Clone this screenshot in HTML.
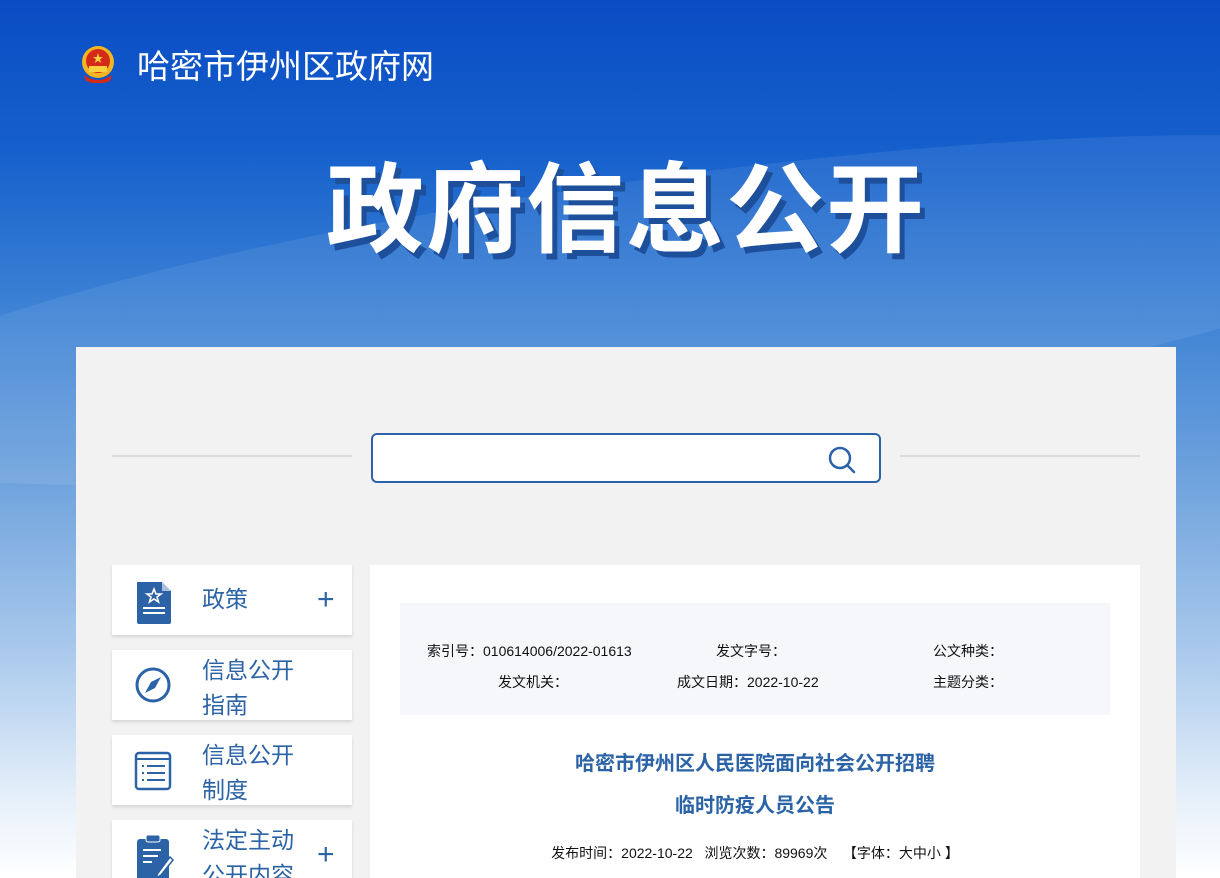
<!DOCTYPE html>
<html><head><meta charset="utf-8"><style>
*{margin:0;padding:0;box-sizing:border-box}
html,body{width:1220px;height:878px;overflow:hidden}
body{position:relative;font-family:"Liberation Sans","Noto Sans CJK SC",sans-serif;
background:linear-gradient(180deg,#0a4cc4 0px,#1560cc 150px,#3a80d4 300px,#6fa3dd 480px,#a9c9ec 650px,#e6f0fa 800px,#ffffff 878px);}
#wrap{position:absolute;left:0;top:0;width:1220px;height:878px;overflow:hidden}
.wave{position:absolute;left:-200px;top:180px;width:1700px;height:260px;border-radius:50%;background:rgba(255,255,255,0.08);transform:rotate(-8deg)}
.logo{position:absolute;left:80px;top:45px;width:36px;height:38px}
.site{position:absolute;left:137px;top:40px;color:#fff;font-size:33px}
.big{position:absolute;left:0;width:1252px;top:131px;text-align:center;color:#fff;font-size:98px;font-weight:bold;letter-spacing:2px;text-shadow:5px 6px 0 #1d4f9a}
.panel{position:absolute;left:76px;top:347px;width:1100px;height:531px;background:#f2f2f2}
.line{position:absolute;top:455px;height:2px;background:#dcdcdc}
.search{position:absolute;left:371px;top:433px;width:510px;height:50px;border:2px solid #2c62a8;border-radius:6px;background:#fff}
.nav{position:absolute;left:112px;width:240px;height:70px;background:#fff;box-shadow:0 2px 3px rgba(0,0,0,0.12);color:#2b63a6;font-size:23px}
.nav .t{position:absolute;left:90px;line-height:35px}
.nav .p{position:absolute;left:205px;top:20px;font-size:30px;line-height:30px}
.nav svg{position:absolute;left:22px;top:15px}
.main{position:absolute;left:370px;top:565px;width:770px;height:313px;background:#fff}
.info{position:absolute;left:400px;top:603px;width:710px;height:112px;background:#f5f7fb;font-size:14px;color:#111}
.info span{position:absolute;white-space:nowrap}
.h{position:absolute;left:370px;width:770px;text-align:center;color:#2b63a6;font-weight:bold;font-size:20px}
.meta{position:absolute;left:370px;width:770px;top:843px;text-align:center;font-size:14px;color:#111}
</style></head><body><div id="wrap">
<div class="wave"></div>
<svg class="logo" viewBox="0 0 36 38"><circle cx="18" cy="17" r="16" fill="#f2b620"/><circle cx="18" cy="16" r="12" fill="#d42a1a"/><polygon points="18,8 19.3,12 23,12 20,14.3 21.2,18 18,15.7 14.8,18 16,14.3 13,12 16.7,12" fill="#f8d040"/><rect x="9" y="21" width="18" height="6" fill="#f8d040"/><path d="M4 30 Q18 40 32 30 L30 36 Q18 41 6 36Z" fill="#d42a1a"/></svg>
<div class="site">哈密市伊州区政府网</div>
<div class="big">政府信息公开</div>
<div class="panel"></div>
<div class="line" style="left:112px;width:240px"></div>
<div class="line" style="left:900px;width:240px"></div>
<div class="search"><svg style="position:absolute;left:454px;top:10px" width="30" height="30" viewBox="0 0 30 30"><circle cx="13" cy="13" r="10" fill="none" stroke="#2c62a8" stroke-width="2.5"/><line x1="20.5" y1="20.5" x2="27" y2="27" stroke="#2c62a8" stroke-width="2.5" stroke-linecap="round"/></svg></div>

<div class="nav" style="top:565px"><svg width="40" height="46" viewBox="0 0 40 46"><path d="M3 2H28L37 11V42Q37 44 35 44H5Q3 44 3 42Z" fill="#2b63a6"/><path d="M28 2V11H37" fill="#fff" opacity=".6"/><polygon points="20,9 22,14 27,14 23,17 24.5,22 20,19 15.5,22 17,17 13,14 18,14" fill="none" stroke="#fff" stroke-width="1.6"/><rect x="9" y="27" width="22" height="2" fill="#fff"/><rect x="9" y="32" width="22" height="2" fill="#fff"/></svg><div class="t" style="top:17px">政策</div><div class="p">+</div></div>
<div class="nav" style="top:650px"><svg width="40" height="40" viewBox="0 0 40 40" style="top:16px"><circle cx="19" cy="19" r="16" fill="none" stroke="#2b63a6" stroke-width="3"/><path d="M27 11L21 22L11 27L17 16Z" fill="#2b63a6"/></svg><div class="t" style="top:3px">信息公开<br>指南</div></div>
<div class="nav" style="top:735px"><svg width="40" height="40" viewBox="0 0 40 40" style="top:16px"><rect x="2" y="2" width="34" height="36" rx="3" fill="none" stroke="#2b63a6" stroke-width="2.5"/><line x1="2" y1="8" x2="36" y2="8" stroke="#2b63a6" stroke-width="2"/><g stroke="#2b63a6" stroke-width="2"><line x1="8" y1="15" x2="10" y2="15"/><line x1="13" y1="15" x2="31" y2="15"/><line x1="8" y1="22" x2="10" y2="22"/><line x1="13" y1="22" x2="31" y2="22"/><line x1="8" y1="29" x2="10" y2="29"/><line x1="13" y1="29" x2="31" y2="29"/></g></svg><div class="t" style="top:3px">信息公开<br>制度</div></div>
<div class="nav" style="top:820px"><svg width="40" height="46" viewBox="0 0 40 46"><rect x="3" y="4" width="32" height="42" rx="3" fill="#2b63a6"/><rect x="12" y="0" width="14" height="7" rx="2" fill="#2b63a6" stroke="#fff"/><g stroke="#fff" stroke-width="2"><line x1="9" y1="15" x2="27" y2="15"/><line x1="9" y1="21" x2="24" y2="21"/><line x1="9" y1="27" x2="18" y2="27"/></g><path d="M36 22L24 38L22 43L27 40L39 25Z" fill="#fff" stroke="#2b63a6" stroke-width="1.5"/></svg><div class="t" style="top:3px">法定主动<br>公开内容</div><div class="p">+</div></div>

<div class="main"></div>
<div class="info">
<span style="left:27px;top:38px">索引号：010614006/2022-01613</span>
<span style="left:316px;top:38px">发文字号：</span>
<span style="left:533px;top:38px">公文种类：</span>
<span style="left:98px;top:69px">发文机关：</span>
<span style="left:277px;top:69px">成文日期：2022-10-22</span>
<span style="left:533px;top:69px">主题分类：</span>
</div>
<div class="h" style="top:747px">哈密市伊州区人民医院面向社会公开招聘</div>
<div class="h" style="top:789px">临时防疫人员公告</div>
<div class="meta">发布时间：2022-10-22&nbsp;&nbsp;&nbsp;浏览次数：89969次&nbsp;&nbsp;&nbsp;&nbsp;【字体：大中小 】</div>
</div></body></html>
